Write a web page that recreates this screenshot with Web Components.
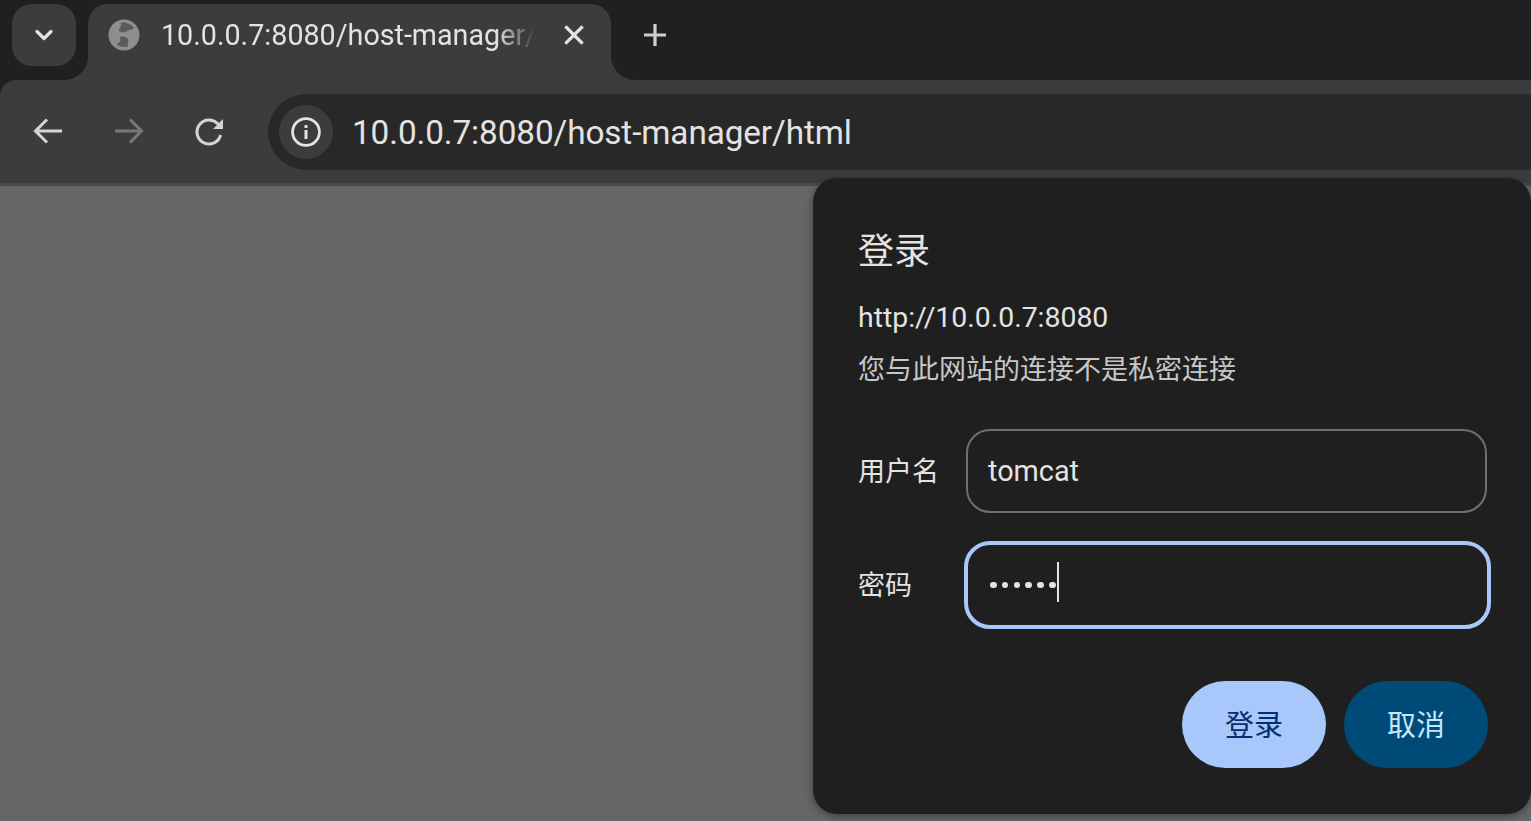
<!DOCTYPE html>
<html lang="zh">
<head>
<meta charset="utf-8">
<title>10.0.0.7:8080/host-manager/html</title>
<style>
  html, body { margin: 0; height: 100%; background: #666666; overflow: hidden; }
  body { font-family: Roboto, "Noto Sans CJK SC", sans-serif; color: #e3e3e3; }
</style>
</head>
<body>
<browser-window>
  <tab-strip title-text="10.0.0.7:8080/host-manager/html"></tab-strip>
  <nav-toolbar url="10.0.0.7:8080/host-manager/html"></nav-toolbar>
</browser-window>
<auth-dialog origin="http://10.0.0.7:8080" username="tomcat"></auth-dialog>

<script>
const stripTemplate = document.createElement("template");
stripTemplate.innerHTML = `
<style>
  :host { display: flex; height: 80px; background: #1f2120; align-items: flex-start; padding: 4px 0 0 12px; box-sizing: border-box; }
  .tab-search { position: relative; z-index: 1; width: 64px; height: 62px; border-radius: 20px; background: #3c3c3c; display: flex; align-items: center; justify-content: center; margin-right: 12px; }
  .tab { position: relative; width: 523px; height: 76px; background: #3c3c3c; border-radius: 20px 20px 0 0; display: flex; align-items: flex-start; box-sizing: border-box; padding: 15px 0 0 20px; }
  .tab::before, .tab::after { content: ""; position: absolute; bottom: 0; width: 24px; height: 24px; }
  .tab::before { left: -24px; background: radial-gradient(circle at 0 0, #1f2120 23.5px, #3c3c3c 24.5px); }
  .tab::after { right: -24px; background: radial-gradient(circle at 100% 0, #1f2120 23.5px, #3c3c3c 24.5px); }
  .globe { width: 32px; height: 32px; flex: none; }
  .title { width: 374px; margin-left: 21px; font-size: 28.7px; line-height: 32px; height: 36px; white-space: nowrap; overflow: hidden; color: #e3e3e3; font-weight: 400;
    -webkit-mask-image: linear-gradient(to right, #000 335px, transparent 374px); mask-image: linear-gradient(to right, #000 335px, transparent 374px); }
  .close { width: 24px; height: 24px; margin: 4px 0 0 27px; flex: none; }
  .new-tab { width: 28px; height: 28px; margin: 17px 0 0 30px; flex: none; }
  svg { display: block; }
</style>
<div class="tab-search">
  <svg width="24" height="24" viewBox="0 0 24 24" fill="none" stroke="#e3e3e3" stroke-width="3.2" stroke-linecap="round" stroke-linejoin="round"><path d="M5 8.5l7 7 7-7"/></svg>
</div>
<div class="tab">
  <svg class="globe" viewBox="0 0 32 32">
    <circle cx="16" cy="16" r="15.5" fill="#8e8e8e"/>
    <path fill="#5a5a5a" d="M13 3.6C17 3 22.5 4.6 26 9c-2 2.4-5.4 1.2-7.6 3.4-2 1.8-5 1-7.2-.2C10 9.4 14 8.6 13 3.6zM12 18c3-1.2 6.2 0 8 2 1 2-1 3.4 0 7.4-4 1-8.4.2-11.4-2.2C11 24 13 23 12 18z"/>
  </svg>
  <span class="title"></span>
  <svg class="close" viewBox="0 0 24 24" fill="none" stroke="#e3e3e3" stroke-width="3.2" stroke-linecap="square"><path d="M4.5 4.5l15 15M19.5 4.5l-15 15"/></svg>
</div>
<svg class="new-tab" viewBox="0 0 28 28" fill="none" stroke="#cfcfcf" stroke-width="3.2"><path d="M14 3v22M3 14h22"/></svg>
`;

class TabStrip extends HTMLElement {
  constructor() {
    super();
    this.shadow = this.attachShadow({ mode: "open" });
    this.shadow.append(stripTemplate.content.cloneNode(true));
    this.shadow.querySelector(".title").textContent = this.getAttribute("title-text") || "";
  }
}

const toolbarTemplate = document.createElement("template");
toolbarTemplate.innerHTML = `
<style>
  :host { display: flex; height: 106px; background: #3c3c3c; align-items: flex-start; box-sizing: border-box; padding: 14px 0 0 30px; border-radius: 16px 0 0 0; border-bottom: 3px solid #4a4a4a; }
  .icon { width: 36px; height: 36px; margin: 19px 45px 0 0; flex: none; display: block; }
  .icon:nth-of-type(3) { margin-right: 40px; }
  .omnibox { flex: 1; height: 76px; background: #282828; border-radius: 38px 0 0 38px; display: flex; align-items: center; padding-left: 11px; }
  .chip { width: 54px; height: 54px; border-radius: 50%; background: #3c3c3c; display: flex; align-items: center; justify-content: center; flex: none; }
  .url { margin-left: 19px; padding-top: 2px; font-size: 33.3px; line-height: 40px; color: #e3e3e3; white-space: nowrap; font-weight: 400; letter-spacing: -0.1px; }
</style>
<svg class="icon" viewBox="0 0 36 36" fill="none" stroke="#d5d5d5" stroke-width="3"><path d="M32 18H6M17 6.5L5.5 18 17 29.5"/></svg>
<svg class="icon" viewBox="0 0 36 36" fill="none" stroke="#797979" stroke-width="3"><path d="M4 18h26M19 6.5L30.5 18 19 29.5"/></svg>
<svg class="icon" viewBox="0 0 36 36" fill="none" stroke="#d5d5d5" stroke-width="3"><path d="M28.6 22A12 12 0 1 1 25.5 10.5l3.6 3.6"/><path fill="#d5d5d5" stroke="none" d="M31 6v10H21z"/></svg>
<div class="omnibox">
  <div class="chip">
    <svg width="32" height="32" viewBox="0 0 32 32"><circle cx="16" cy="16" r="13.4" fill="none" stroke="#e3e3e3" stroke-width="2.8"/><rect x="14.5" y="14" width="3" height="9" fill="#e3e3e3"/><rect x="14.5" y="9" width="3" height="3" fill="#e3e3e3"/></svg>
  </div>
  <span class="url"></span>
</div>
`;

class NavToolbar extends HTMLElement {
  constructor() {
    super();
    this.shadow = this.attachShadow({ mode: "open" });
    this.shadow.append(toolbarTemplate.content.cloneNode(true));
    this.shadow.querySelector(".url").textContent = this.getAttribute("url") || "";
  }
}

class BrowserWindow extends HTMLElement {
  constructor() {
    super();
    this.attachShadow({ mode: "open" }).innerHTML = `
      <style>:host { display: block; background: #1f2120; }</style>
      <slot></slot>`;
  }
}

const fieldTemplate = document.createElement("template");
fieldTemplate.innerHTML = `
<style>
  :host { display: flex; align-items: center; height: 84px; }
  .label { width: 108px; flex: none; font-size: 27px; padding-bottom: 4px; color: #e3e3e3; font-family: "Noto Sans CJK SC", sans-serif; font-weight: 400; }
  .box { width: 522px; height: 84px; box-sizing: border-box; border: 2.5px solid #6f6f6f; border-radius: 24px; display: flex; align-items: center; padding-left: 20px; font-family: Roboto, sans-serif; font-size: 28.8px; font-weight: 400; color: #e3e3e3; position: relative; }
  :host([focused]) .box { border-color: #a8c7fa; border-width: 4px; width: 528px; height: 88px; margin: 0 -4px 0 -2px; border-radius: 26px; padding-left: 22px; }
  .dots { display: flex; gap: 5.2px; }
  .dots i { width: 6.6px; height: 6.6px; background: #e3e3e3; border-radius: 50%; display: block; }
  .caret { width: 2px; height: 40px; background: #e3e3e3; margin: -6px 0 0 1px; }
</style>
<div class="label"></div>
<div class="box"></div>
`;

class AuthField extends HTMLElement {
  constructor() {
    super();
    this.shadow = this.attachShadow({ mode: "open" });
    this.shadow.append(fieldTemplate.content.cloneNode(true));
  }

  connectedCallback() {
    this.shadow.querySelector(".label").textContent = this.getAttribute("label") || "";
    const box = this.shadow.querySelector(".box");
    if (this.hasAttribute("masked")) {
      const n = Number(this.getAttribute("masked"));
      box.innerHTML = `<span class="dots">${"<i></i>".repeat(n)}</span><span class="caret"></span>`;
    } else {
      box.textContent = this.getAttribute("value") || "";
    }
  }
}

class PillButton extends HTMLElement {
  constructor() {
    super();
    this.attachShadow({ mode: "open" }).innerHTML = `
      <style>
        :host { display: flex; align-items: center; justify-content: center; box-sizing: border-box; padding-bottom: 4px; width: 144px; height: 87px; border-radius: 44px; background: var(--bg); color: var(--fg); font-size: 29px; font-family: "Noto Sans CJK SC", sans-serif; font-weight: 400; }
      </style>
      <slot></slot>`;
  }
}

const dialogTemplate = document.createElement("template");
dialogTemplate.innerHTML = `
<style>
  :host { position: absolute; left: 813px; top: 178px; width: 718px; height: 636px; box-sizing: border-box; background: #1f1f1f; border-radius: 24px; box-shadow: 0 2px 8px rgba(0,0,0,.4); padding: 48px 44px 0 45px; font-family: "Noto Sans CJK SC", sans-serif; }
  h1 { margin: 0; font-size: 36px; line-height: 44px; font-weight: 400; color: #e3e3e3; height: 44px; }
  .origin { margin-top: 30px; font-family: Roboto, sans-serif; font-size: 28.4px; line-height: 36px; font-weight: 400; color: #e3e3e3; }
  .note { margin-top: 13px; font-size: 27px; line-height: 38px; font-weight: 400; color: #c7c7c7; }
  .fields { display: flex; flex-direction: column; gap: 30px; margin-top: 42px; }
  .actions { display: flex; justify-content: flex-end; gap: 18px; margin: 54px -1px 0 0; }
  .primary { --bg: #a8c7fa; --fg: #062e6f; }
  .secondary { --bg: #004a77; --fg: #c2e7ff; }
</style>
<h1>登录</h1>
<div class="origin"></div>
<div class="note">您与此网站的连接不是私密连接</div>
<div class="fields">
  <auth-field class="user" label="用户名"></auth-field>
  <auth-field label="密码" masked="6" focused></auth-field>
</div>
<div class="actions">
  <pill-button class="primary">登录</pill-button>
  <pill-button class="secondary">取消</pill-button>
</div>
`;

class AuthDialog extends HTMLElement {
  constructor() {
    super();
    this.shadow = this.attachShadow({ mode: "open" });
    this.shadow.append(dialogTemplate.content.cloneNode(true));
  }

  connectedCallback() {
    this.shadow.querySelector(".origin").textContent = this.getAttribute("origin") || "";
    const user = this.shadow.querySelector(".user");
    user.setAttribute("value", this.getAttribute("username") || "");
    user.shadowRoot.querySelector(".box").textContent = this.getAttribute("username") || "";
  }
}

customElements.define("tab-strip", TabStrip);
customElements.define("nav-toolbar", NavToolbar);
customElements.define("browser-window", BrowserWindow);
customElements.define("auth-field", AuthField);
customElements.define("pill-button", PillButton);
customElements.define("auth-dialog", AuthDialog);
</script>
</body>
</html>
